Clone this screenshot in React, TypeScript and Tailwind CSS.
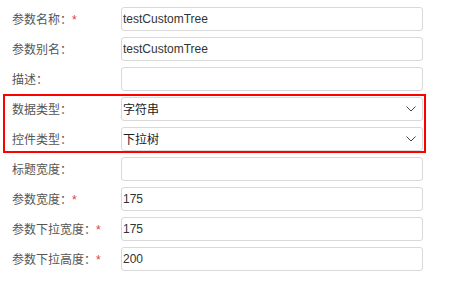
import React from "react";

type Row = {
  label: string;
  required?: boolean;
  value?: string;
  select?: boolean;
};

const top: Row[] = [
  { label: "参数名称：", required: true, value: "testCustomTree" },
  { label: "参数别名：", value: "testCustomTree" },
  { label: "描述：" },
];

const marked: Row[] = [
  { label: "数据类型：", value: "字符串", select: true },
  { label: "控件类型：", value: "下拉树", select: true },
];

const bottom: Row[] = [
  { label: "标题宽度：" },
  { label: "参数宽度：", required: true, value: "175" },
  { label: "参数下拉宽度：", required: true, value: "175" },
  { label: "参数下拉高度：", required: true, value: "200" },
];

function Chevron() {
  return (
    <svg width="10" height="6" viewBox="0 0 10 6" className="shrink-0">
      <polyline points="0.5,0.5 5,5 9.5,0.5" fill="none" stroke="#444" strokeWidth="1" />
    </svg>
  );
}

function FormRow({ row }: { row: Row }) {
  return (
    <div className="flex h-6 items-center">
      <div className="w-[109px] shrink-0 text-[12px] text-[#555] font-['Noto_Sans_CJK_SC','Noto_Sans',sans-serif]">
        {row.label}
        {row.required && <span className="text-[#e4393c] font-['Liberation_Sans',sans-serif]">*</span>}
      </div>
      <div className="flex h-6 w-[302px] items-center justify-between rounded-[3px] border border-[#d9d9d9] bg-white pl-px pr-[6px]">
        <span
          className={
            row.select
              ? "text-[12px] text-[#222] font-['Noto_Sans_CJK_SC',sans-serif]"
              : "text-[12px] text-[#333] font-['Liberation_Sans',Arial,sans-serif]"
          }
        >
          {row.value}
        </span>
        {row.select && <Chevron />}
      </div>
    </div>
  );
}

export default function App() {
  return (
    <div className="h-[292px] w-[456px] bg-white pl-[12px] pt-[7px]">
      <div className="flex w-[411px] flex-col gap-[6px]">
        {top.map((r) => (
          <FormRow key={r.label} row={r} />
        ))}
        <div className="relative flex flex-col gap-[6px]">
          {marked.map((r) => (
            <FormRow key={r.label} row={r} />
          ))}
          <div className="pointer-events-none absolute -top-[3px] -bottom-[2px] -left-[9px] -right-[3px] border-2 border-[#ff0000]" />
        </div>
        {bottom.map((r) => (
          <FormRow key={r.label} row={r} />
        ))}
      </div>
    </div>
  );
}
